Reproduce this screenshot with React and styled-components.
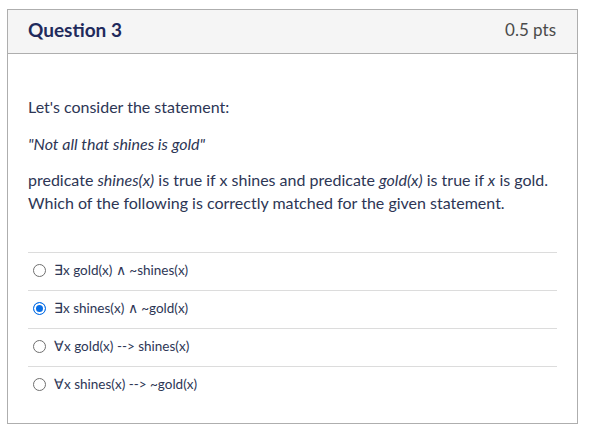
import React from 'react';
import styled, { createGlobalStyle } from 'styled-components';

const GlobalStyle = createGlobalStyle`
  html, body {
    margin: 0;
    padding: 0;
    background: #ffffff;
  }
  body {
    font-family: Lato, "Liberation Sans", sans-serif;
  }
`;

const Page = styled.div`
  padding: 9px 17px 0 7px;
`;

const Card = styled.div`
  border: 1px solid #aeaeae;
  background: #ffffff;
`;

const Header = styled.div`
  height: 44px;
  box-sizing: border-box;
  display: flex;
  align-items: center;
  justify-content: space-between;
  padding: 0 21px 4px 20px;
  background: #f5f5f5;
  border-bottom: 1px solid #aeaeae;
`;

const Title = styled.h2`
  margin: 0;
  font-size: 19px;
  font-weight: 700;
  color: #1f2a5c;
`;

const Points = styled.span`
  font-size: 17px;
  font-weight: 400;
  color: #4a4a4a;
`;

const Body = styled.div`
  padding: 41px 20px 19px 20px;
  color: #2d3655;
`;

const Text = styled.p`
  margin: 0 0 13.5px 0;
  font-size: 16px;
  line-height: 23px;
  &:last-of-type {
    margin-bottom: 0;
  }
`;

const Answers = styled.div`
  margin-top: 38px;
`;

const Row = styled.label`
  display: flex;
  align-items: center;
  gap: 8px;
  height: 38px;
  box-sizing: border-box;
  padding: 0 0 3px 5px;
  border-top: 1px solid #dcdcdc;
  font-size: 13.5px;
  color: #2d3655;
`;

const Radio = styled.span`
  width: 13px;
  height: 13px;
  border-radius: 50%;
  box-sizing: border-box;
  flex-shrink: 0;
  border: 1px solid ${p => (p.checked ? '#0a6fe6' : '#6f6f6f')};
  background: ${p => (p.checked ? '#0a6fe6' : '#ffffff')};
  box-shadow: ${p => (p.checked ? 'inset 0 0 0 2px #ffffff' : 'none')};
`;

const answers = [
  { text: '∃x gold(x) ∧ ~shines(x)', checked: false },
  { text: '∃x shines(x) ∧ ~gold(x)', checked: true },
  { text: '∀x gold(x) --> shines(x)', checked: false },
  { text: '∀x shines(x) --> ~gold(x)', checked: false },
];

export default function App() {
  return (
    <>
      <GlobalStyle />
      <Page>
        <Card>
          <Header>
            <Title>Question 3</Title>
            <Points>0.5 pts</Points>
          </Header>
          <Body>
            <Text>Let's consider the statement:</Text>
            <Text><em>"Not all that shines is gold"</em></Text>
            <Text>
              predicate <em>shines(x)</em> is true if x shines and predicate <em>gold(x)</em> is
              true if <em>x</em> is gold. Which of the following is correctly matched for the
              given statement.
            </Text>
            <Answers>
              {answers.map(a => (
                <Row key={a.text}>
                  <Radio checked={a.checked} />
                  {a.text}
                </Row>
              ))}
            </Answers>
          </Body>
        </Card>
      </Page>
    </>
  );
}
